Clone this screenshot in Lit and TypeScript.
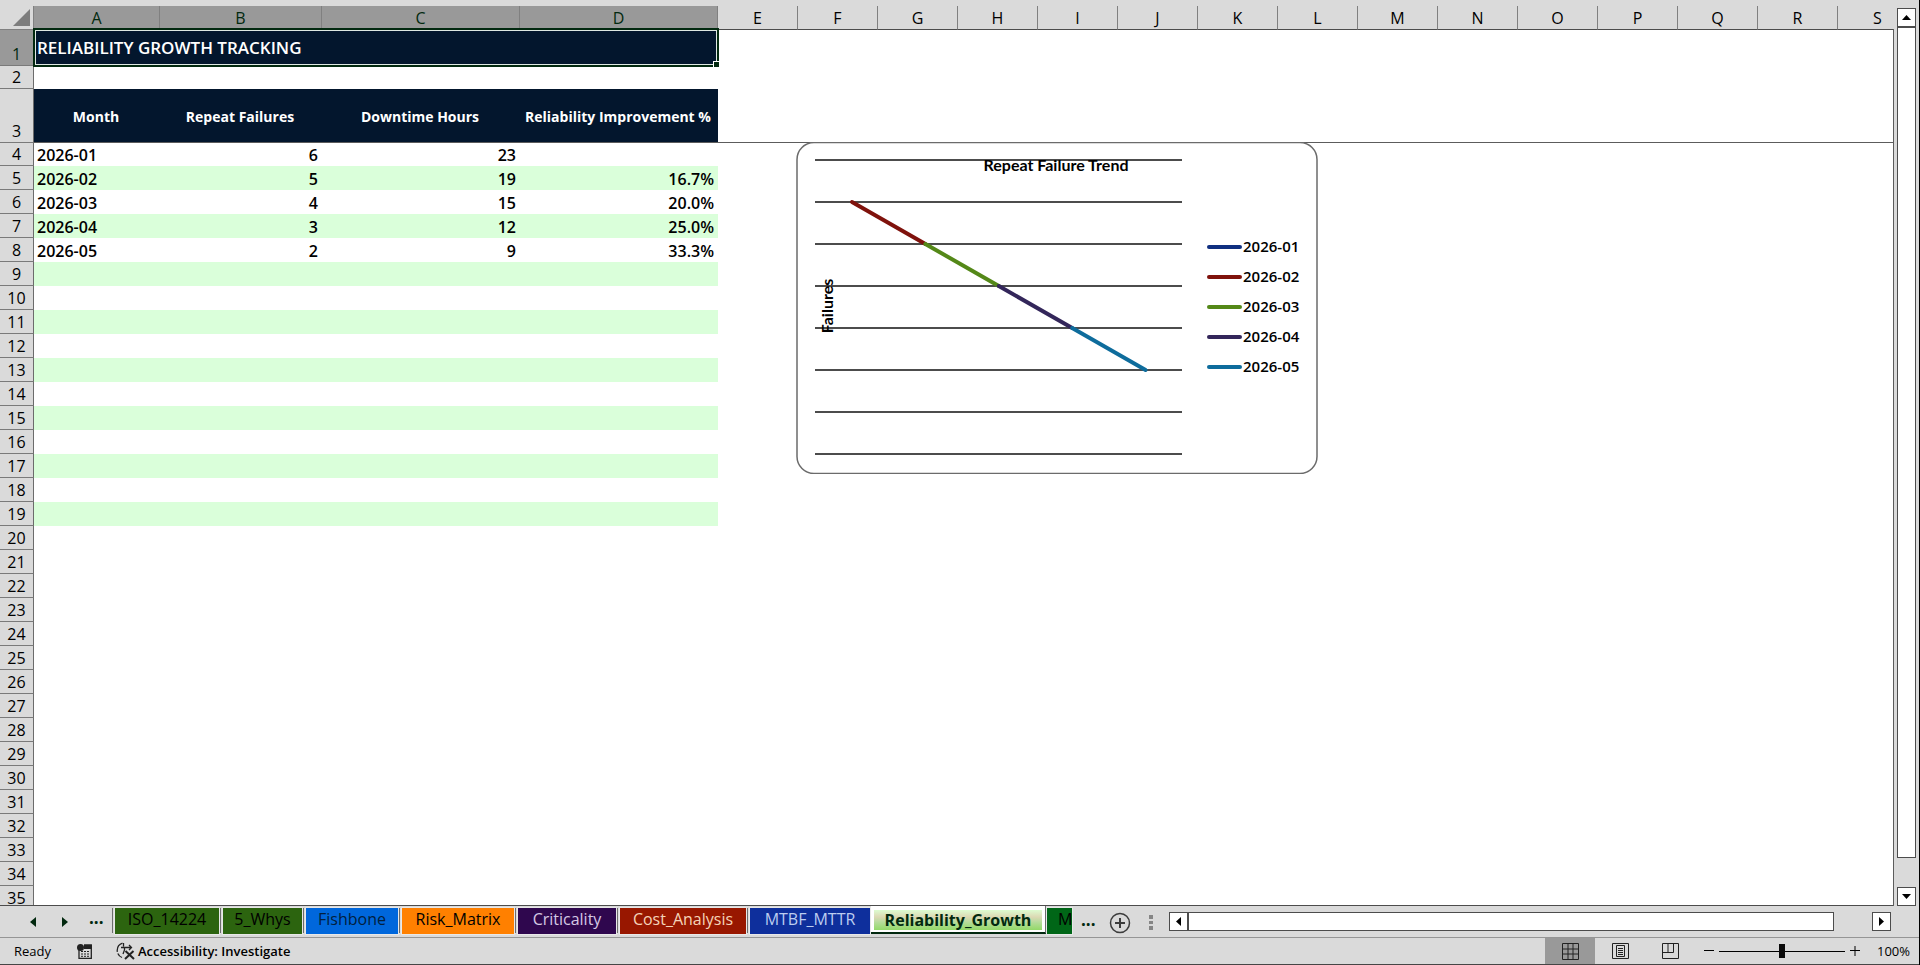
import { LitElement, html, svg, css } from "lit";
import { customElement, state } from "lit/decorators.js";
import { classMap } from "lit/directives/class-map.js";

const COLUMNS = "ABCDEFGHIJKLMNOPQRS".split("");
const LAST_ROW = 35;
const HEADINGS = ["Month", "Repeat Failures", "Downtime Hours", "Reliability Improvement %"];
const RECORDS = [
  ["2026-01", "6", "23", ""],
  ["2026-02", "5", "19", "16.7%"],
  ["2026-03", "4", "15", "20.0%"],
  ["2026-04", "3", "12", "25.0%"],
  ["2026-05", "2", "9", "33.3%"],
];

@customElement("trend-chart")
class TrendChart extends LitElement {
  static styles = css`
    :host { display: block; }
    svg { display: block; width: 100%; height: 100%; }
    .frame { fill: #fff; stroke: #6b6b6b; stroke-width: 1.5; }
    .grid { stroke: #111; stroke-width: 1.5; }
    .series { stroke-width: 4; stroke-linecap: round; }
    .title { font: 700 16px Lato, sans-serif; text-anchor: middle; }
    .legend { font: 600 15px "Open Sans", sans-serif; }
  `;
  render() {
    const colors = ["#102f80", "#7f120c", "#548818", "#33265a", "#0e6c9c"];
    const px = (i: number) => 56 + i * 73.4;
    const py = (i: number) => 60 + i * 42;
    return html`<svg viewBox="0 0 522 332" role="img" aria-label="Repeat Failure Trend">
      <rect class="frame" x="1" y="0.5" width="520" height="331" rx="17"></rect>
      ${[0, 1, 2, 3, 4, 5, 6, 7].map((i) => svg`<line class="grid" x1="19" x2="386" y1=${18 + i * 42} y2=${18 + i * 42}></line>`)}
      ${[0, 1, 2, 3].map((i) => svg`<line class="series" stroke=${colors[i + 1]} x1=${px(i)} y1=${py(i)} x2=${px(i + 1)} y2=${py(i + 1)}></line>`)}
      <text class="title" x="260" y="29">Repeat Failure Trend</text>
      <text class="title" transform="translate(37 164) rotate(-90)">Failures</text>
      ${colors.map((c, i) => svg`<line class="series" stroke=${c} x1="413" x2="444" y1=${105 + i * 30} y2=${105 + i * 30}></line>
        <text class="legend" x="447" y=${110 + i * 30}>2026-0${i + 1}</text>`)}
    </svg>`;
  }
}

@customElement("sheet-grid")
class SheetGrid extends LitElement {
  static styles = css`
    :host {
      display: block; position: relative; overflow: hidden; min-height: 0; padding-top: 6px;
      background: #dadada; border-bottom: 1px solid #4c4c4c;
    }
    table {
      table-layout: fixed; width: 0; border-collapse: separate; border-spacing: 0; background: #fff;
      font: 600 16px/20px "Open Sans", "Noto Sans", sans-serif; color: #000;
    }
    th, td { box-sizing: border-box; padding: 0; overflow: hidden; white-space: nowrap; }
    .side { width: 34px; } .a { width: 126px; } .b { width: 162px; } .c { width: 198px; } .e { width: 80px; }
    tr { height: 24px; }
    .row-title { height: 36px; } .row-head { height: 54px; } .row-short { height: 23px; }
    .col, .num, .corner { background: #dadada; font-weight: 400; }
    .col { border-right: 1px solid #808080; border-bottom: 1px solid #4c4c4c; line-height: 20px; padding-top: 1px; }
    .num { border-right: 1px solid #6c6c6c; border-bottom: 1px solid #7a7a7a; vertical-align: bottom; line-height: 22px; }
    .picked { background: #999; color: #02290f; }
    .corner { border-right: 1px solid #808080; border-bottom: 1px solid #808080; line-height: 0; text-align: right; padding-right: 3px; }
    .corner svg { display: inline-block; }
    .heading {
      position: relative; overflow: visible; background: #03162d; color: #fff; text-align: left;
      padding-left: 3px; font-size: 17px; font-weight: 600;
    }
    .selection {
      position: absolute; inset: -2px -1px -1px -1px; border: 2px solid #02290f; box-shadow: inset 0 0 0 1px #dfe8e2;
    }
    .handle { position: absolute; right: -3px; bottom: -3px; width: 5px; height: 5px; background: #02290f; border: 1px solid #fff; }
    .field { background: #03162d; color: #fff; font-size: 14px; text-align: center; border-bottom: 1px solid #5c5c5c; padding: 2px 2px 0 0; }
    .frozen { border-bottom: 1px solid #5c5c5c; }
    .text, .value { vertical-align: bottom; line-height: 22px; }
    .text { text-align: left; padding-left: 3px; }
    .value { text-align: right; padding-right: 4px; }
    .band { background: #daffda; }
    trend-chart { position: absolute; left: 796px; top: 142px; width: 522px; height: 332px; }
  `;
  row(n: number) {
    const record = RECORDS[n - 4] ?? ["", "", "", ""];
    const band = n % 2 === 1 && n < 20;
    return html`<tr class=${classMap({ "row-short": n === 4 })}>
      <th class="num" scope="row">${n}</th>
      ${record.map((v, i) => html`<td class=${classMap({ text: i === 0, value: i > 0, band })}>${v}</td>`)}
      <td colspan="15"></td>
    </tr>`;
  }
  render() {
    return html`
      <table>
        <colgroup>
          <col class="side"><col class="a"><col class="b"><col class="c"><col class="c">
          ${COLUMNS.slice(4).map(() => html`<col class="e">`)}
        </colgroup>
        <thead><tr>
          <td class="corner"><svg width="17" height="17" viewBox="0 0 17 17"><path d="M17 0V17H0Z" fill="#7d7d7d"/></svg></td>
          ${COLUMNS.map((c, i) => html`<th scope="col" class=${classMap({ col: true, picked: i < 4 })}>${c}</th>`)}
        </tr></thead>
        <tbody>
          <tr class="row-title">
            <th class="num picked" scope="row">1</th>
            <td class="heading" colspan="4">RELIABILITY GROWTH TRACKING<div class="selection"><div class="handle"></div></div></td>
            <td colspan="15"></td>
          </tr>
          <tr class="row-short"><th class="num" scope="row">2</th><td colspan="19"></td></tr>
          <tr class="row-head">
            <th class="num" scope="row">3</th>
            ${HEADINGS.map((h) => html`<th class="field" scope="col">${h}</th>`)}
            <td class="frozen" colspan="15"></td>
          </tr>
          ${Array.from({ length: LAST_ROW - 3 }, (_, i) => this.row(i + 4))}
        </tbody>
      </table>
      <trend-chart></trend-chart>
    `;
  }
}

const TABS = [
  { name: "ISO_14224", width: 104, bg: "#2c640f", fg: "#000" },
  { name: "5_Whys", width: 79, bg: "#2c640f", fg: "#000" },
  { name: "Fishbone", width: 92, bg: "#0067dc", fg: "#02203c" },
  { name: "Risk_Matrix", width: 112, bg: "#ff8000", fg: "#000" },
  { name: "Criticality", width: 98, bg: "#2f074e", fg: "#d5c8e4" },
  { name: "Cost_Analysis", width: 126, bg: "#981700", fg: "#f5d3b8" },
  { name: "MTBF_MTTR", width: 120, bg: "#0e2f9c", fg: "#bccdf0" },
];

@customElement("app-root")
class AppRoot extends LitElement {
  @state() zoom = 100;
  static styles = css`
    :host {
      display: grid; grid-template-rows: minmax(0, 1fr) 32px 27px; height: 100vh; box-sizing: border-box;
      background: #dadada; border-right: 1px solid #000;
      font-family: "Open Sans", "Noto Sans", sans-serif; color: #000;
    }
    button { font: inherit; color: inherit; border: 0; padding: 0; margin: 0; background: none; }
    svg { display: block; }
    .work { display: grid; grid-template-columns: minmax(0, 1fr) 26px; min-height: 0; }
    .vscroll {
      display: flex; flex-direction: column; padding: 8px 3px 0 4px; box-sizing: border-box; position: relative;
    }
    .edge { width: 1px; position: absolute; left: 0; top: 29px; bottom: 0; background: #5c5c5c; }
    .arrow {
      box-sizing: border-box; width: 19px; height: 19px; flex: none; background: #fff; border: 1px solid #4c4c4c;
      display: grid; place-items: center;
    }
    .vthumb { flex: 1; background: #fff; border: 1px solid #4c4c4c; margin-bottom: 29px; }
    .tabs { display: flex; align-items: flex-start; min-width: 0; box-sizing: border-box; border-bottom: 1px solid #959595; }
    .nav { width: 112px; flex: none; display: flex; align-items: center; height: 32px; color: #02290f; }
    .prev { margin-left: 30px; } .next { margin-left: 26px; }
    .more { font-size: 17px; line-height: 20px; font-weight: 700; color: #02290f; }
    .nav .more { margin: 0 0 8px 21px; }
    .slot { flex: none; display: flex; padding: 0 1px 0 2px; border-left: 1px solid #6c6c6c; margin-top: 2px; height: 25px; }
    .tab { height: 26px; font-size: 16px; line-height: 22px; padding-bottom: 4px; white-space: nowrap; box-shadow: 0 0 0 1px #e8e8e8; }
    .strong { font-weight: 500; }
    .active {
      flex: none; width: 175px; height: 29px; background: #fff; border-bottom: 2px solid #02290f; box-sizing: border-box;
      padding: 4px 3px 2px; margin-top: -1px; border-right: 1px solid #6c6c6c;
      font-size: 16px; font-weight: 700; line-height: 20px; color: #02290f; white-space: nowrap;
    }
    .glow { display: block; background: linear-gradient(#ddfcd0, #dcd9b4 35%, #b7dc9c 60%, #93d968); }
    .cut { width: 25px; overflow: hidden; flex: none; background: #006617; text-align: left; padding-left: 11px; box-sizing: border-box; margin: 2px 0 0 1px; }
    .tabs > .more { margin: 4px 0 0 9px; }
    .add { margin: 6px 0 0 13px; }
    .grip { margin: 9px 0 0 18px; }
    .hscroll { flex: 1; min-width: 0; display: flex; margin: 6px 28px 0 16px; }
    .hthumb { flex: 1; background: #fff; border: 1px solid #4c4c4c; margin-right: 38px; }
    .status { display: flex; align-items: center; height: 27px; box-sizing: border-box; border-bottom: 1px solid #454545; font-size: 13px; line-height: 20px; }
    .ready { margin-left: 14px; width: 63px; }
    .access { display: flex; align-items: center; gap: 3px; margin-left: 24px; font-weight: 600; }
    .views { margin-left: auto; display: flex; align-self: stretch; }
    .view { width: 50px; display: grid; place-items: center; }
    .on { background: #999; }
    .zoom { display: flex; align-items: center; margin-left: 9px; }
    .slider { appearance: none; width: 126px; height: 16px; margin: 0 5px; background: linear-gradient(#000, #000) center / 100% 1px no-repeat; }
    .slider::-webkit-slider-thumb { appearance: none; width: 6px; height: 14px; background: #0a0a0a; }
    .percent { width: 55px; box-sizing: border-box; padding-left: 17px; margin-right: 4px; }
  `;
  arrow(label: string, d: string) {
    return html`<button class="arrow" aria-label=${label}><svg width="9" height="9" viewBox="0 0 9 9"><path d=${d} /></svg></button>`;
  }
  render() {
    return html`
      <main class="work">
        <sheet-grid></sheet-grid>
        <div class="vscroll">
          <div class="edge"></div>
          ${this.arrow("Scroll up", "M4.5 2 9 7H0Z")}
          <div class="vthumb"></div>
          ${this.arrow("Scroll down", "M4.5 7 9 2H0Z")}
        </div>
      </main>
      <nav class="tabs">
        <div class="nav">
          <button class="prev" aria-label="Previous sheet"><svg width="6" height="10" viewBox="0 0 6 10"><path d="M6 0V10L0 5Z" fill="#02290f"/></svg></button>
          <button class="next" aria-label="Next sheet"><svg width="6" height="10" viewBox="0 0 6 10"><path d="M0 0V10L6 5Z" fill="#02290f"/></svg></button>
          <button class="more">...</button>
        </div>
        ${TABS.map((t) => html`<div class="slot"><button class=${classMap({ tab: true, strong: t.name === "Risk_Matrix" })}
          style="width:${t.width}px;background:${t.bg};color:${t.fg}">${t.name}</button></div>`)}
        <button class="active"><span class="glow">Reliability_Growth</span></button>
        <button class="tab cut">M</button>
        <button class="more">...</button>
        <button class="add" aria-label="New sheet"><svg width="22" height="22" viewBox="0 0 22 22" fill="none" stroke="#3c3c3c"><circle cx="11" cy="11" r="9.5" stroke-width="1.5"/><path d="M11 6V16M6 11H16" stroke-width="2"/></svg></button>
        <svg class="grip" width="4" height="15" viewBox="0 0 4 15" fill="#858585"><path d="M0 0H4V4H0ZM0 6H4V9H0ZM0 11H4V15H0Z"/></svg>
        <div class="hscroll">
          ${this.arrow("Scroll left", "M2 4.5 7 0V9Z")}
          <div class="hthumb"></div>
          ${this.arrow("Scroll right", "M7 4.5 2 0V9Z")}
        </div>
      </nav>
      <footer class="status">
        <span class="ready">Ready</span>
        <svg width="15" height="15" viewBox="0 0 15 15"><path d="M2 3V14.3H14.3V1H7" fill="none" stroke="#222" stroke-width="1.3"/><path d="M7 1H15V5H7Z" fill="#222"/><circle cx="3.5" cy="3.5" r="3.5" fill="#222"/><path d="M4 7.5H12.5M4 10H12.5M4 12.3H12.5" stroke="#222" stroke-dasharray="2 1"/></svg>
        <span class="access">
          <svg width="19" height="18" viewBox="0 0 19 18" fill="none" stroke="#222" stroke-width="1.3"><path d="M6.500 1.200A7.600 7.600 0 0 0 6 15.500" stroke-dasharray="11 1.500"/><path d="M5 5.500H15.500M7.500 1V4.500M8.500 5.500V8L7 12M13 3 15.500 5.500 13 8"/><path d="M9.500 9 18 17M17.500 9 9 17" stroke-width="2"/></svg>
          Accessibility: Investigate
        </span>
        <div class="views">
          <button class="view on" aria-label="Normal"><svg width="17" height="17" viewBox="0 0 17 17" fill="none" stroke="#222"><path d="M.5 .5H16.500V16.500H.5ZM6 .5V16.500M11 .5V16.500M.5 6H16.500M.5 11H16.500"/></svg></button>
          <button class="view" aria-label="Page layout"><svg width="17" height="16" viewBox="0 0 17 16" fill="none" stroke="#222"><path d="M.5 .5H16.500V15.500H.5ZM4.500 2.500H12.500V13.500H4.500ZM6 5.500H11M6 7.500H11M6 9.500H11M6 11.500H11"/></svg></button>
          <button class="view" aria-label="Page break preview"><svg width="17" height="16" viewBox="0 0 17 16" fill="none" stroke="#222"><path d="M.5 .5H16.500V15.500H.5ZM.5 9.500H11.500V.5M6 .5V9.500"/></svg></button>
        </div>
        <div class="zoom">
          <button aria-label="Zoom out"><svg width="10" height="10" viewBox="0 0 10 10"><path d="M0 4.500H10" stroke="#000"/></svg></button>
          <input class="slider" type="range" min="0" max="200" .value=${String(this.zoom)} aria-label="Zoom"
            @input=${(e: Event) => (this.zoom = Number((e.target as HTMLInputElement).value))}>
          <button aria-label="Zoom in"><svg width="10" height="10" viewBox="0 0 10 10"><path d="M0 4.500H10M5 0V10" stroke="#000"/></svg></button>
          <span class="percent">${this.zoom}%</span>
        </div>
      </footer>
    `;
  }
}
